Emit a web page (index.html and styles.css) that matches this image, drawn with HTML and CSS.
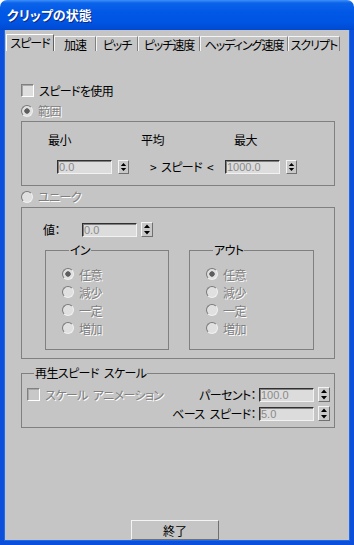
FILE: index.html
```html
<!DOCTYPE html>
<html lang="ja">
<head>
    <meta charset="UTF-8">
    <title>クリップの状態</title>
    <link rel="stylesheet" href="styles.css">
</head>
<body>
    <div class="window">
        <div class="titlebar">クリップの状態</div>
        <div class="client">
            <div class="tabs">
                <div class="tab active t1">スピード</div>
                <div class="tab t2">加速</div>
                <div class="tab t3">ピッチ</div>
                <div class="tab t4">ピッチ速度</div>
                <div class="tab t5">ヘッディング速度</div>
                <div class="tab t6">スクリプト</div>
            </div>

            <div class="page">
                <div class="row use-speed">
                    <span class="check"></span>
                    <span>スピードを使用</span>
                </div>
                <div class="row range-opt">
                    <span class="radio on"></span>
                    <span class="dis">範囲</span>
                </div>

                <div class="box range">
                    <div class="labels">
                        <span>最小</span>
                        <span>平均</span>
                        <span>最大</span>
                    </div>
                    <div class="range-inputs">
                        <input class="num" type="text" value="0.0" readonly>
                        <span class="spin"><svg width="10" height="12" viewBox="0 0 10 12"><path d="M5 1.5 L8 5 H2 Z M2 7 H8 L5 10.5 Z" fill="#000"/></svg></span>
                        <span class="between">&gt; スピード &lt;</span>
                        <input class="num" type="text" value="1000.0" readonly>
                        <span class="spin"><svg width="10" height="12" viewBox="0 0 10 12"><path d="M5 1.5 L8 5 H2 Z M2 7 H8 L5 10.5 Z" fill="#000"/></svg></span>
                    </div>
                </div>

                <div class="row unique-opt">
                    <span class="radio"></span>
                    <span class="dis">ユニーク</span>
                </div>

                <div class="box unique">
                    <div class="value-row">
                        <span class="value-label">値：</span>
                        <input class="num" type="text" value="0.0" readonly>
                        <span class="spin tall"><svg width="10" height="13" viewBox="0 0 10 13"><path d="M5 1.5 L8 5 H2 Z M2 8 H8 L5 11.5 Z" fill="#000"/></svg></span>
                    </div>
                    <div class="in-out">
                        <fieldset class="opts in">
                            <legend>イン</legend>
                            <div class="option"><span class="radio on"></span><span class="dis">任意</span></div>
                            <div class="option"><span class="radio"></span><span class="dis">減少</span></div>
                            <div class="option"><span class="radio"></span><span class="dis">一定</span></div>
                            <div class="option"><span class="radio"></span><span class="dis">増加</span></div>
                        </fieldset>
                        <fieldset class="opts out">
                            <legend>アウト</legend>
                            <div class="option"><span class="radio on"></span><span class="dis">任意</span></div>
                            <div class="option"><span class="radio"></span><span class="dis">減少</span></div>
                            <div class="option"><span class="radio"></span><span class="dis">一定</span></div>
                            <div class="option"><span class="radio"></span><span class="dis">増加</span></div>
                        </fieldset>
                    </div>
                </div>

                <fieldset class="scale">
                    <legend>再生スピード スケール</legend>
                    <div class="scale-grid">
                        <div class="row scale-anim">
                            <span class="check off"></span>
                            <span class="dis">スケール アニメーション</span>
                        </div>
                        <span class="field-label">パーセント：</span>
                        <input class="num" type="text" value="100.0" readonly>
                        <span class="spin tall"><svg width="10" height="13" viewBox="0 0 10 13"><path d="M5 1.5 L8 5 H2 Z M2 8 H8 L5 11.5 Z" fill="#000"/></svg></span>
                        <span></span>
                        <span class="field-label">ベース スピード：</span>
                        <input class="num" type="text" value="5.0" readonly>
                        <span class="spin tall"><svg width="10" height="13" viewBox="0 0 10 13"><path d="M5 1.5 L8 5 H2 Z M2 8 H8 L5 11.5 Z" fill="#000"/></svg></span>
                    </div>
                </fieldset>
            </div>

            <div class="footer">
                <button class="close-btn">終了</button>
            </div>
        </div>
    </div>
</body>
</html>
```

FILE: styles.css
```css
body {
    margin: 0;
    background: #fff;
}
.window {
    width: 354px;
    height: 545px;
    display: flex;
    flex-direction: column;
    font-family: "Noto Sans CJK JP", "Noto Sans", sans-serif;
    font-size: 12px;
    font-feature-settings: "palt" 1;
    letter-spacing: -0.6px;
    word-spacing: 3px;
    color: #000;
}
.titlebar {
    height: 30px;
    line-height: 30px;
    padding-left: 7px;
    border-radius: 7px 7px 0 0;
    background: linear-gradient(#3d8ff7 0, #0c63ea 3px, #0058e6 12px, #0055e3 22px, #0049d0 30px);
    color: #fff;
    font-weight: bold;
    font-size: 13px;
    letter-spacing: 0;
    text-shadow: 1px 1px 0 #0a2a8a;
}
.client {
    flex: 1;
    display: flex;
    flex-direction: column;
    background: #c5c5c5;
    border: 4px solid #0b4fdb;
    border-top: 0;
    box-shadow: inset 1px 0 0 #1d6cf0, inset -1px 0 0 #1d6cf0, inset 0 -1px 0 #1d6cf0;
}

/* tabs */
.tabs {
    display: flex;
    align-items: flex-end;
    height: 17px;
    margin: 4px 0 0 2px;
}
.tab {
    height: 15px;
    line-height: 15px;
    text-align: center;
    white-space: nowrap;
    letter-spacing: -1px;
    box-sizing: border-box;
    border-top: 1px solid #f4f4f4;
    border-left: 1px solid #f4f4f4;
    border-right: 1px solid #808080;
}
.tab.active {
    height: 17px;
    line-height: 16px;
    border-top: 1px solid #fff;
    border-left: 1px solid #fff;
    border-right: 1px solid #606060;
}
.t1 { width: 48px; }
.t2 { width: 42px; }
.t3 { width: 42px; }
.t4 { width: 62px; }
.t5 { width: 88px; }
.t6 { width: 52px; }

/* page */
.page {
    padding: 0 15px 0 17px;
}
.row {
    display: flex;
    align-items: center;
    gap: 5px;
    height: 13px;
    line-height: 13px;
    white-space: nowrap;
}
.use-speed { margin-top: 33px; }
.range-opt { margin-top: 7px; }
.unique-opt { margin-top: 4px; }
.dis {
    color: #808080;
    text-shadow: 1px 1px 0 #fff;
}
.check {
    width: 13px;
    height: 13px;
    box-sizing: border-box;
    background: #dedede;
    border: 1px solid;
    border-color: #808080 #fff #fff #808080;
    box-shadow: inset 1px 1px 0 #a8a8a8;
    flex-shrink: 0;
}
.check.off {
    background: #c8c8c8;
}
.radio {
    width: 12px;
    height: 12px;
    box-sizing: border-box;
    border-radius: 50%;
    background: #e0e0e0;
    border: 1px solid;
    border-color: #7a7a7a #f0f0f0 #f0f0f0 #7a7a7a;
    flex-shrink: 0;
}
.radio.on {
    background: radial-gradient(circle, #5e5e5e 0 2.4px, #e0e0e0 3px);
}
.box {
    box-sizing: border-box;
    border: 1px solid #808080;
}
.range {
    margin-top: 4px;
    height: 65px;
    padding: 11px 0 0 26px;
}
.labels {
    display: flex;
    height: 14px;
    line-height: 14px;
}
.labels span {
    width: 93px;
}
.range-inputs {
    display: flex;
    align-items: center;
    margin: 11px 0 0 9px;
}
.num {
    width: 55px;
    height: 14px;
    box-sizing: border-box;
    margin: 0;
    padding: 0 0 0 1px;
    background: #dcdcdc;
    border: 1px solid;
    border-color: #303030 #f2f2f2 #f2f2f2 #303030;
    box-shadow: inset 1px 1px 0 #808080;
    font-family: "Liberation Sans", Arial, sans-serif;
    font-size: 11px;
    letter-spacing: 0;
    color: #8a8a8a;
    outline: none;
}
.spin {
    display: flex;
    align-items: center;
    justify-content: center;
    width: 11px;
    height: 14px;
    box-sizing: border-box;
    margin-left: 6px;
    background: #c8c8c8;
    border: 1px solid;
    border-color: #f4f4f4 #707070 #707070 #f4f4f4;
}
.spin.tall {
    width: 12px;
    height: 15px;
    margin-left: 4px;
}
.between {
    width: 75px;
    margin-left: 21px;
    white-space: nowrap;
}
.unique {
    margin-top: 4px;
    height: 152px;
    padding: 14px 0 0 21px;
}
.value-row {
    display: flex;
    align-items: center;
    height: 15px;
}
.value-label {
    width: 39px;
}
.in-out {
    display: flex;
    gap: 20px;
    margin: 6px 0 0 2px;
}
fieldset {
    margin: 0;
    min-width: 0;
    box-sizing: border-box;
    border: 1px solid #808080;
}
legend {
    margin-left: 7px;
    padding: 0 1px;
    line-height: 14px;
}
.opts {
    height: 107px;
    padding: 8px 0 0 16px;
}
.opts.in { width: 124px; }
.opts.out { width: 125px; }
.option {
    display: flex;
    align-items: center;
    gap: 5px;
    height: 18px;
}
.scale {
    margin-top: 7px;
    height: 62px;
    padding: 7px 4px 0 5px;
}
.scale-grid {
    display: grid;
    grid-template-columns: 1fr auto 55px 16px;
    grid-auto-rows: 15px;
    row-gap: 4px;
    align-items: center;
}
.scale-anim {
    height: 15px;
}
.field-label {
    text-align: right;
    padding-right: 3px;
    white-space: nowrap;
}

/* footer */
.footer {
    margin-top: auto;
    padding: 0 0 0 127px;
    margin-bottom: 1px;
}
.close-btn {
    width: 88px;
    height: 20px;
    margin: 0;
    padding: 0;
    background: #c5c5c5;
    border: 1px solid;
    border-color: #f4f4f4 #707070 #707070 #f4f4f4;
    font-family: "Noto Sans CJK JP", sans-serif;
    font-size: 12px;
    color: #000;
}
```
